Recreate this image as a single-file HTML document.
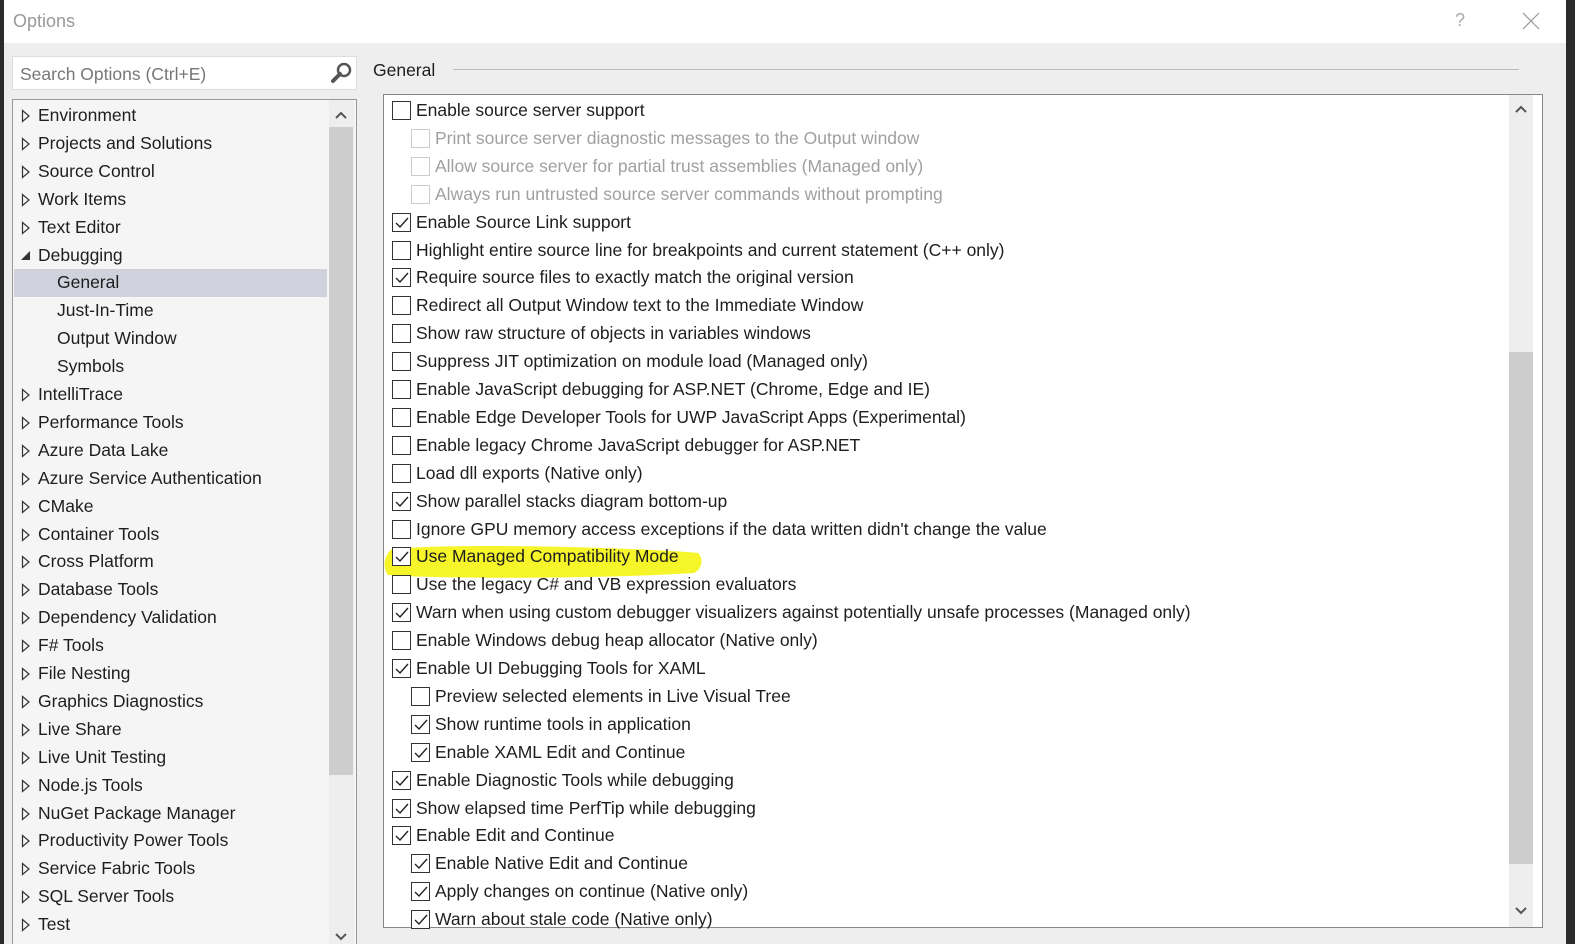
<!DOCTYPE html>
<html><head><meta charset="utf-8"><style>
*{margin:0;padding:0;box-sizing:border-box}
html,body{width:1575px;height:944px;overflow:hidden}
body{background:#eeeeee;font-family:"Liberation Sans",sans-serif;position:relative;color:#1e1e1e}
.title{position:absolute;left:0;top:0;width:1575px;height:43px;background:#fff}
.abs{position:absolute;white-space:nowrap}
.row{position:absolute;font-size:17.5px;line-height:20px;white-space:nowrap}
.cb{position:absolute;width:19px;height:19px;border:1px solid #333;background:#fff}
.cb.dis{border-color:#ccc}
.cb svg{position:absolute;left:2px;top:3px}
.dim{color:#a0a0a0}
</style></head><body>
<div class="title"></div>
<div class="abs" style="left:0;top:0;width:4px;height:944px;background:#2b2b2b"></div>
<div class="abs" style="left:1566px;top:0;width:9px;height:944px;background:#2b2b2b"></div>
<div class="abs" style="left:13px;top:11px;font-size:18px;color:#999">Options</div>
<div class="abs" style="left:1455px;top:10px;font-size:18px;color:#aaa">?</div>
<svg class="abs" style="left:1522px;top:12px" width="18" height="18"><path d="M1 1L17 17M17 1L1 17" stroke="#999" stroke-width="1.2"/></svg>

<div class="abs" style="left:12px;top:56px;width:345px;height:34px;background:#fff;border:1px solid #ddd"></div>
<div class="abs" style="left:20px;top:64px;font-size:17.5px;color:#777">Search Options (Ctrl+E)</div>
<svg class="abs" style="left:331px;top:62px" width="22" height="22"><circle cx="13" cy="8" r="6" fill="none" stroke="#555" stroke-width="2.5"/><path d="M9 12L2 19" stroke="#555" stroke-width="4" stroke-linecap="round"/></svg>

<div class="abs" style="left:12px;top:99px;width:345px;height:860px;background:#f5f5f5;border:1px solid #999"></div>
<div class="abs" style="left:14px;top:269px;width:313px;height:28px;background:#cfd1dc"></div>
<div class="abs" style="left:329px;top:100px;width:25px;height:844px;background:#eeeeee"></div>
<div class="abs" style="left:329px;top:127px;width:24px;height:648px;background:#cdcdcd"></div>
<svg class="abs" style="left:334px;top:110px" width="14" height="10"><path d="M2 8L7 3L12 8" stroke="#555" stroke-width="2" fill="none"/></svg>
<svg class="abs" style="left:334px;top:932px" width="14" height="10"><path d="M2 2L7 7L12 2" stroke="#555" stroke-width="2" fill="none"/></svg>
<div id="tree"></div>

<div class="abs" style="left:373px;top:60px;font-size:17.5px;color:#1e1e1e">General</div>
<div class="abs" style="left:453px;top:69px;width:1066px;height:1px;background:#bbb"></div>
<div class="abs" style="left:383px;top:94px;width:1160px;height:834px;background:#fff;border:1px solid #888"></div>
<div class="abs" style="left:1509px;top:95px;width:24px;height:832px;background:#eeeeee"></div>
<div class="abs" style="left:1509px;top:352px;width:24px;height:512px;background:#cdcdcd"></div>
<svg class="abs" style="left:1514px;top:104px" width="14" height="10"><path d="M2 8L7 3L12 8" stroke="#555" stroke-width="2" fill="none"/></svg>
<svg class="abs" style="left:1514px;top:906px" width="14" height="10"><path d="M2 2L7 7L12 2" stroke="#555" stroke-width="2" fill="none"/></svg>
<svg class="abs" style="left:380px;top:537px" width="330" height="45"><path d="M12 12 C80 6,250 10,318 16 C324 22,322 32,314 36 C220 42,60 42,8 38 C2 30,4 18,12 12Z" fill="#f5f52a"/></svg>
<div id="opts"></div>

<script>
var tree=[["Environment",0,1],["Projects and Solutions",0,1],["Source Control",0,1],["Work Items",0,1],["Text Editor",0,1],["Debugging",0,2],["General",1,0],["Just-In-Time",1,0],["Output Window",1,0],["Symbols",1,0],["IntelliTrace",0,1],["Performance Tools",0,1],["Azure Data Lake",0,1],["Azure Service Authentication",0,1],["CMake",0,1],["Container Tools",0,1],["Cross Platform",0,1],["Database Tools",0,1],["Dependency Validation",0,1],["F# Tools",0,1],["File Nesting",0,1],["Graphics Diagnostics",0,1],["Live Share",0,1],["Live Unit Testing",0,1],["Node.js Tools",0,1],["NuGet Package Manager",0,1],["Productivity Power Tools",0,1],["Service Fabric Tools",0,1],["SQL Server Tools",0,1],["Test",0,1]];
var h="";
tree.forEach(function(t,i){var y=116+i*27.9;
 h+='<div class="row" style="left:'+(t[1]?57:38)+'px;top:'+(y-11)+'px">'+t[0]+'</div>';
 if(t[2]==1)h+='<svg class="abs" style="left:21px;top:'+(y-7)+'px" width="10" height="14"><path d="M1.5 1.5L8 7L1.5 12.5Z" fill="none" stroke="#333" stroke-width="1.2"/></svg>';
 if(t[2]==2)h+='<svg class="abs" style="left:20px;top:'+(y-6)+'px" width="12" height="12"><path d="M10 1L10 10L1 10Z" fill="#333"/></svg>';
});
document.getElementById("tree").innerHTML=h;
var o=[["Enable source server support",0,0],["Print source server diagnostic messages to the Output window",1,0,1],["Allow source server for partial trust assemblies (Managed only)",1,0,1],["Always run untrusted source server commands without prompting",1,0,1],["Enable Source Link support",0,1],["Highlight entire source line for breakpoints and current statement (C++ only)",0,0],["Require source files to exactly match the original version",0,1],["Redirect all Output Window text to the Immediate Window",0,0],["Show raw structure of objects in variables windows",0,0],["Suppress JIT optimization on module load (Managed only)",0,0],["Enable JavaScript debugging for ASP.NET (Chrome, Edge and IE)",0,0],["Enable Edge Developer Tools for UWP JavaScript Apps (Experimental)",0,0],["Enable legacy Chrome JavaScript debugger for ASP.NET",0,0],["Load dll exports (Native only)",0,0],["Show parallel stacks diagram bottom-up",0,1],["Ignore GPU memory access exceptions if the data written didn't change the value",0,0],["Use Managed Compatibility Mode",0,1],["Use the legacy C# and VB expression evaluators",0,0],["Warn when using custom debugger visualizers against potentially unsafe processes (Managed only)",0,1],["Enable Windows debug heap allocator (Native only)",0,0],["Enable UI Debugging Tools for XAML",0,1],["Preview selected elements in Live Visual Tree",1,0],["Show runtime tools in application",1,1],["Enable XAML Edit and Continue",1,1],["Enable Diagnostic Tools while debugging",0,1],["Show elapsed time PerfTip while debugging",0,1],["Enable Edit and Continue",0,1],["Enable Native Edit and Continue",1,1],["Apply changes on continue (Native only)",1,1],["Warn about stale code (Native only)",1,1]];
h="";
o.forEach(function(t,i){var y=111+i*27.9;var x=t[1]?411:392;
 h+='<div class="cb'+(t[3]?' dis':'')+'" style="left:'+x+'px;top:'+(y-10)+'px">'+(t[2]?'<svg width="14" height="12"><path d="M1 6L5 10L13 1" stroke="#222" stroke-width="1.4" fill="none"/></svg>':'')+'</div>';
 h+='<div class="row'+(t[3]?' dim':'')+'" style="left:'+(x+24)+'px;top:'+(y-11)+'px">'+t[0]+'</div>';
});
document.getElementById("opts").innerHTML=h;
</script>
</body></html>
